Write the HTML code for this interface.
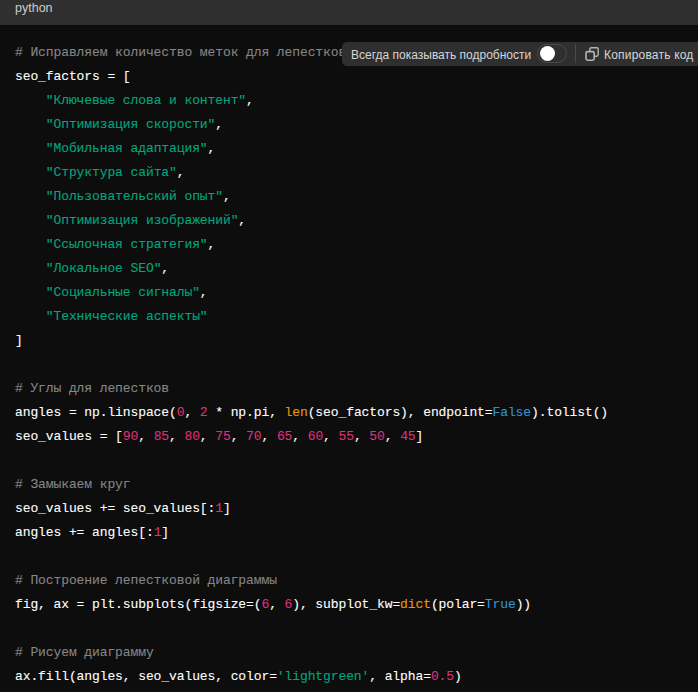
<!DOCTYPE html>
<html><head><meta charset="utf-8">
<style>
html,body{margin:0;padding:0;background:#0d0d0d;width:698px;height:692px;overflow:hidden;}
.bar{position:absolute;left:0;top:0;width:698px;height:25px;background:#2f2f2f;}
.lang{position:absolute;left:15px;top:-2px;font:12.5px/20px "Liberation Sans",sans-serif;color:#cdcdcd;}
.code{position:absolute;left:15px;top:41px;margin:0;font-family:"Liberation Mono",monospace;font-size:13px;letter-spacing:-0.1px;line-height:24px;color:#ffffff;white-space:pre;-webkit-text-stroke:0.1px currentColor;}
.c{color:#858585}
.s{color:#00a67d}
.n{color:#df3079}
.b{color:#e9950c}
.l{color:#2e95d3}
.tb{position:absolute;left:342px;top:42px;width:370px;height:24px;background:#2f2f2f;border-radius:5px;}
.tb .t1{position:absolute;left:9px;top:1px;font:12px/24px "Liberation Sans",sans-serif;color:#d6d6d6;white-space:nowrap;}
.tog{position:absolute;left:195px;top:2px;width:28px;height:17px;border:1px solid #4a4a4a;border-radius:10px;box-sizing:content-box;}
.knob{position:absolute;left:2px;top:1px;width:15px;height:15px;border-radius:50%;background:#fff;}
.div{position:absolute;left:233px;top:2px;width:1px;height:19px;background:#4a4a4a;}
.tb .t2{position:absolute;left:262px;top:1px;letter-spacing:0.2px;font:12px/24px "Liberation Sans",sans-serif;color:#d6d6d6;white-space:nowrap;}
.ico{position:absolute;left:240px;top:0px;}
</style></head><body>
<div class="bar"><div class="lang">python</div></div>
<pre class="code"><span class="c"># Исправляем количество меток для лепестков</span>
seo_factors = [
    <span class="s">"Ключевые слова и контент"</span>,
    <span class="s">"Оптимизация скорости"</span>,
    <span class="s">"Мобильная адаптация"</span>,
    <span class="s">"Структура сайта"</span>,
    <span class="s">"Пользовательский опыт"</span>,
    <span class="s">"Оптимизация изображений"</span>,
    <span class="s">"Ссылочная стратегия"</span>,
    <span class="s">"Локальное SEO"</span>,
    <span class="s">"Социальные сигналы"</span>,
    <span class="s">"Технические аспекты"</span>
]

<span class="c"># Углы для лепестков</span>
angles = np.linspace(<span class="n">0</span>, <span class="n">2</span> * np.pi, <span class="b">len</span>(seo_factors), endpoint=<span class="l">False</span>).tolist()
seo_values = [<span class="n">90</span>, <span class="n">85</span>, <span class="n">80</span>, <span class="n">75</span>, <span class="n">70</span>, <span class="n">65</span>, <span class="n">60</span>, <span class="n">55</span>, <span class="n">50</span>, <span class="n">45</span>]

<span class="c"># Замыкаем круг</span>
seo_values += seo_values[:<span class="n">1</span>]
angles += angles[:<span class="n">1</span>]

<span class="c"># Построение лепестковой диаграммы</span>
fig, ax = plt.subplots(figsize=(<span class="n">6</span>, <span class="n">6</span>), subplot_kw=<span class="b">dict</span>(polar=<span class="l">True</span>))

<span class="c"># Рисуем диаграмму</span>
ax.fill(angles, seo_values, color=<span class="s">'lightgreen'</span>, alpha=<span class="n">0.5</span>)
</pre>
<div class="tb">
<div class="t1">Всегда показывать подробности</div>
<div class="tog"><div class="knob"></div></div>
<div class="div"></div>
<svg class="ico" width="20" height="24" viewBox="0 0 20 24"><rect x="7.8" y="5.7" width="8.4" height="8.5" rx="1.6" fill="none" stroke="#b4b4b4" stroke-width="1.4"/><rect x="4" y="9.6" width="8.2" height="8.6" rx="1.6" fill="#2f2f2f" stroke="#b4b4b4" stroke-width="1.6"/></svg>
<div class="t2">Копировать код</div>
</div>
</body></html>
